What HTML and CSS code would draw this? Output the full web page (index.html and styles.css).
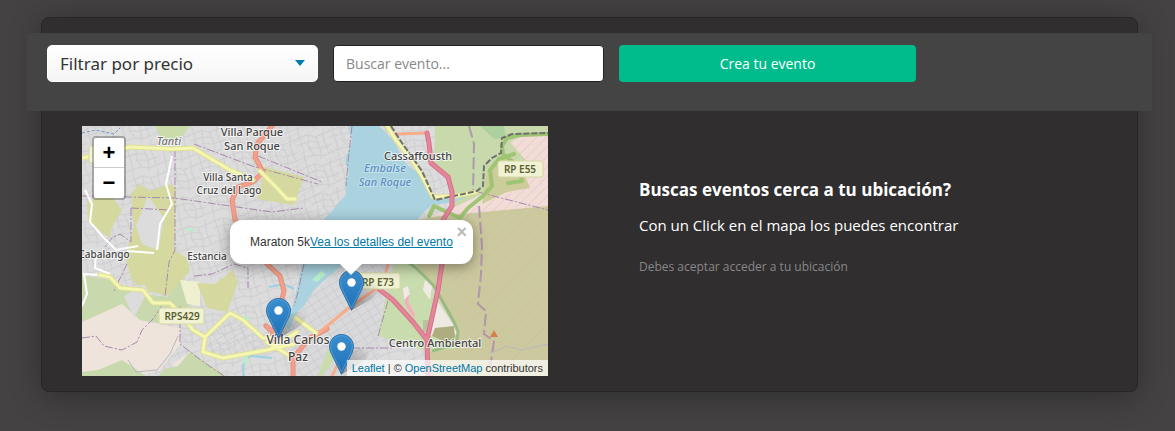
FILE: index.html
```html
<!DOCTYPE html>
<html lang="es">
<head>
<meta charset="utf-8">
<meta name="viewport" content="width=device-width, initial-scale=1">
<title>Eventos</title>
<link rel="stylesheet" href="styles.css">
</head>
<body>
<main class="card">
  <form class="toolbar">
    <div class="select-wrap">
      <select class="control select" aria-label="Filtrar por precio">
        <option>Filtrar por precio</option>
      </select>
    </div>
    <input class="control search" type="text" placeholder="Buscar evento..." aria-label="Buscar evento">
    <button class="control create" type="button">Crea tu evento</button>
  </form>
  <div class="content">
    <section class="map" aria-label="Mapa de eventos">
      <svg class="tiles" viewBox="0 0 466 250" preserveAspectRatio="xMidYMid slice">
        <defs>
          <pattern id="streets" width="34" height="30" patternUnits="userSpaceOnUse" patternTransform="rotate(-14)">
            <path d="M0 5L12 3 20 7 34 5M0 11L13 10 22 13M10 16L21 19 34 18M0 25L12 24 23 27 34 25M4 0L5 17 4 30M13 3L11 17 15 24M20 7L22 19 20 30M29 0L27 12 29 25" fill="none" stroke="#cdcdcf" stroke-width="1"/>
          </pattern>
          <pattern id="grid" width="9" height="7" patternUnits="userSpaceOnUse" patternTransform="rotate(-32)">
            <path d="M0 0H9M0 0V7" fill="none" stroke="#c6c6c8" stroke-width="1"/>
          </pattern>
          <pattern id="hatch" width="7" height="7" patternUnits="userSpaceOnUse" patternTransform="rotate(45)">
            <path d="M0 0V7" stroke="#e5a99d" stroke-width="1" opacity=".6"/>
          </pattern>
          <linearGradient id="pin" x1="0" y1="0" x2="0" y2="1">
            <stop offset="0" stop-color="#3b8fce"/><stop offset="1" stop-color="#1e6fb6"/>
          </linearGradient>
          <linearGradient id="shade" x1="0" y1="1" x2="1" y2="0">
            <stop offset="0" stop-color="#000" stop-opacity=".5"/><stop offset="1" stop-color="#000" stop-opacity="0"/>
          </linearGradient>
          <symbol id="marker" viewBox="0 0 42 41">
            <path d="M13 40L20 21Q29 11 39 15 43 22 31 30Z" fill="url(#shade)" opacity=".7"/>
            <path d="M12.500 .5C5.900 .5 .5 5.900 .5 12.600c0 2.600 1 5.300 2.200 7.700L12.500 40.300l9.800-20c1.200-2.400 2.200-5.100 2.200-7.700C24.500 5.900 19.100 .5 12.500 .5z" fill="url(#pin)" stroke="#2b6fa7" stroke-width="1"/>
            <path d="M12.500 1.600C6.500 1.600 1.600 6.500 1.600 12.600c0 2.300 .9 4.900 2 7.200l8.900 18 8.900-18c1.100-2.300 2-4.900 2-7.200C23.400 6.500 18.500 1.600 12.500 1.600z" fill="none" stroke="#5ba5dc" stroke-width="1" opacity=".7"/>
            <circle cx="12.500" cy="12.500" r="4.200" fill="#fff"/>
          </symbol>
        </defs>

        <rect width="466" height="250" fill="#dddcdd"/>
        <rect width="466" height="250" fill="url(#streets)"/>
        <path d="M229 170L262 138H320L300 172 296 250H212L205 200Z" fill="#d9d8da"/>
        <path d="M229 170L262 138H320L300 172 296 250H212L205 200Z" fill="url(#grid)"/>
        <path d="M215 0H262L272 34 262 74 240 94H216L150 90 160 62 181 45 176 25 192 0Z" fill="url(#grid)" opacity=".45"/>
        <path d="M124 211L148 187 181 212 180 222 141 231 122 226Z" fill="url(#grid)"/>

        <!-- land use -->
        <path d="M73 0H108L98 13 80 14Z" fill="#c9dcaa"/>
        <path d="M5 77L18 69 31 72 40 84 30 101 28 112 15 103 6 96Z" fill="#d5d9a0"/>
        <path d="M49 67L58 58 67 65 88 58 94 62 92 124 105 132 108 144 96 160 85 170 65 165 50 155 45 138 44 128 52 100Z" fill="#d5d9a0"/>
        <path d="M66 70L82 92 76 124 60 118 54 100Z" fill="#dddcdd"/>
        <path d="M183 41L222 51 212 79 175 73Z" fill="#d5d9a0"/>
        <path d="M0 149L28 154 60 168 85 171 98 155 110 155 108 180 78 197 51 194 40 182 0 196Z" fill="#c9d9ae"/>
        <path d="M0 196L40 178 58 194 98 202 98 218 78 244 58 250H0Z" fill="#eee4db"/>
        <path d="M42 170L62 158 66 164 52 192Z" fill="#dddcdd"/>
        <path d="M98 154L118 156 118 180 105 178Z" fill="#eff0d0"/>
        <path d="M115 157L133 158 151 144 156 157 145 186 125 182Z" fill="#d5d9a0"/>
        <path d="M90 238L108 226 118 234 100 250Z" fill="#eee4db"/>
        <path d="M0 246L16 244 40 234 64 250H0Z" fill="#c9d9ae"/>
        <path d="M77 250L82 243 96 240 108 226 144 250Z" fill="#c9d9ae"/>
        <path d="M353 0H466V90H372L370 60 352 38Z" fill="#c8d9ac"/>
        <path d="M398 0H422L424 12 412 13Z" fill="#add19e"/>
        <path d="M428 16L440 10 466 9V84L362 94 340 94 375 80 412 62 440 62 447 38Z" fill="#f1dcd8"/>
        <path d="M405 45L426 28 440 42 448 62 425 66 400 78Z" fill="#cdcd9b"/>
        <path d="M358 90L466 80V250H346L348 222 376 214 372 200 350 160 334 138V94Z" fill="#cbca9f"/>
        <path d="M428 16L466 9V250H395L380 180 366 150 362 94 440 62Z" fill="url(#hatch)"/>
        <path d="M312 138H334L376 205 376 222 346 226 296 210 302 180 306 158Z" fill="#c9dcae"/>
        <path d="M356 176L375 204 376 208 345 210Z" fill="#efe9e3"/>
        <path d="M353 202L372 200 373 212 364 216 350 210Z" fill="#aead7f"/>
        <path d="M341 194H348V206H341Z" fill="#b9c29e"/>
        <path d="M323 160L328 166 326 176 333 188 332 192 325 182 321 170Z" fill="#f4adba"/>
        <path d="M321 162L326 160 328 168 322 174ZM343 154L350 160 348 174 341 164Z" fill="#f0e9e4"/>
        <path d="M244 226L257 213 250 238 240 250H236Z" fill="#c9dcae"/>

        <!-- lake and streams -->
        <path d="M266 0H297L311 14 324 38 340 50 351 71 372 71 394 67 372 76 350 79 342 86 335 94 300 100 262 138 245 152 232 164 222 180 214 188 207 204 204 200 212 176 216 158 220 138 226 98 241 94 250 85 257 76 264 69 263 56 267 48 263 34 270 15Z" fill="#aad3df"/>
        <path d="M187 161L202 158 212 163M162 250Q159 235 168 230L190 232" fill="none" stroke="#9bd0e2" stroke-width="2"/>
        <path d="M148 62L153 63 152 68ZM105 102H112V105H105ZM160 190L168 192 164 198ZM230 154L239 145 244 148 235 156ZM160 234L167 228 164 240Z" fill="#b8efcb"/>

        <!-- boundaries -->
        <g class="boundary">
          <path d="M93 23V124L87 136 83 170M0 70L92 72 190 86 222 82M49 82V116L38 108 30 112 22 122M49 82L88 84M112 18L170 40 236 58M176 30L240 56"/>
          <path d="M0 212L14 210 22 220 40 224 55 216 60 204 72 192 82 176M98 180L98 218 120 235 142 250M112 150L130 148 152 138 166 142V162M222 138L216 166 212 180M45 138L32 165"/>
          <path d="M270 0L266 36 264 60M296 210L308 168M256 222H310M396 66L466 84"/>
          <path class="wide" d="M387 0L392 18 391 68M397 80L400 120 399 148 396 178 404 185 402 208 412 215 408 242"/>
        </g>
        <path d="M0 7L14 4 32 8 38 2" class="blue-line"/>

        <!-- tracks -->
        <path d="M3 64L10 78 8 96 22 112 34 124 56 120M90 30L84 58 90 78 78 98 75 124M14 127L13 142 28 148M0 180L5 168 2 148 18 149M45 125L72 127" class="track"/>
        <path d="M46 234L54 246 75 244 88 228 96 210M408 228L424 220 440 224 466 218" fill="none" stroke="#b8b8be" stroke-width="1"/>

        <!-- roads -->
        <path d="M190 0L175 18 173 31 181 46 171 56 156 61 150 74 153 94 170 120 185 138 198 150 202 165 196 190 189 215M211 250V232L228 212 245 203M184 200L198 212" class="road-case primary-case"/>
        <path d="M190 0L175 18 173 31 181 46 171 56 156 61 150 74 153 94 170 120 185 138 198 150 202 165 196 190 189 215M211 250V232L228 212 245 203M184 200L198 212" class="road primary"/>
        <path d="M228 214L268 181 301 158 306 138M316 8L345 7M250 250L260 230" class="road orange"/>
        <path d="M0 32L18 28 48 21 91 23 111 22 131 34 148 44 171 54M178 45L195 62 205 73 213 73M18 149L28 151 38 162 61 164 71 177 88 177 95 184 111 204 123 211 148 187 161 194 181 212 190 212M123 211L121 226 141 232 185 224 212 218M185 216L208 230M190 222L215 206M214 192L234 207" class="road-case yellow-case"/>
        <path d="M0 32L18 28 48 21 91 23 111 22 131 34 148 44 171 54M178 45L195 62 205 73 213 73M18 149L28 151 38 162 61 164 71 177 88 177 95 184 111 204 123 211 148 187 161 194 181 212 190 212M123 211L121 226 141 232 185 224 212 218M185 216L208 230M190 222L215 206M214 192L234 207" class="road yellow"/>
        <path d="M305 0L314 14 330 34 340 50 351 71 374 70 394 66" class="road-case yellow-case"/>
        <path d="M305 0L314 14 330 34 340 50 351 71 374 70 394 66" class="road yellow"/>
        <path d="M347 90L352 80 365 86 378 92 386 82 401 70 410 60 408 44 417 33 432 28" class="road green-road"/>
        <path d="M420 20L425 12 438 9 466 8M420 20L421 28 436 40 440 55 426 57" class="road green-road"/>
        <path d="M309 0L320 17 340 45 353 74 372 70 395 65 401 60 402 40 410 32 419 27 420 12 430 8 466 7" class="rail"/>
        <path d="M318 130L334 142 352 160 372 196 376 206 374 218 350 225" class="path-green"/>
        <path d="M345 7L347 17 349 37 366 51 370 66 370 80 361 94 362 118 360 138 356 164 345 214 346 250M298 164L311 174 331 196 345 214" class="road-case pink-case"/>
        <path d="M345 7L347 17 349 37 366 51 370 66 370 80 361 94 362 118 360 138 356 164 345 214 346 250M298 164L311 174 331 196 345 214" class="road pink"/>
        <path d="M408 211L412 204 416 211Z" fill="#d48248"/>

        <!-- road shields -->
        <g class="shield">
          <rect x="7" y="20" width="12" height="17" rx="2"/>
          <rect x="416" y="35" width="45" height="16" rx="2"/>
          <rect x="77" y="182" width="45" height="16" rx="2"/>
          <rect x="272" y="147" width="46" height="16" rx="2"/>
          <text x="438" y="47">RP E55</text>
          <text x="100" y="194">RPS429</text>
          <text x="296" y="160">RP E73</text>
        </g>

        <!-- place names -->
        <g class="place">
          <text x="170" y="10">Villa Parque</text>
          <text x="170" y="24">San Roque</text>
          <text x="146" y="55" class="small">Villa Santa</text>
          <text x="147" y="68" class="small">Cruz del Lago</text>
          <text x="336" y="34">Cassaffousth</text>
          <text x="22" y="132" class="small">Cabalango</text>
          <text x="125" y="134" class="small">Estancia</text>
          <text x="216" y="218" class="large">Villa Carlos</text>
          <text x="216" y="235" class="large">Paz</text>
          <text x="353" y="221">Centro Ambiental</text>
          <text x="87" y="19" class="river">Tanti</text>
          <text x="303" y="46" class="water">Embalse</text>
          <text x="303" y="60" class="water">San Roque</text>
        </g>
        <use href="#marker" x="257" y="144" width="42" height="41"/>
        <use href="#marker" x="184" y="172" width="42" height="41"/>
        <use href="#marker" x="247" y="208" width="42" height="41"/>
      </svg>
      <div class="zoom">
        <button type="button" aria-label="Acercar">+</button>
        <button type="button" aria-label="Alejar">−</button>
      </div>
      <div class="popup">
        <span>Maraton 5k<a href="#evento">Vea los detalles del evento</a></span>
        <button class="close" type="button" aria-label="Cerrar">×</button>
      </div>
      <div class="attribution"><a href="#leaflet">Leaflet</a> | © <a href="#osm">OpenStreetMap</a> contributors</div>
    </section>
    <section class="info">
      <h1>Buscas eventos cerca a tu ubicación?</h1>
      <p class="lead">Con un Click en el mapa los puedes encontrar</p>
      <p class="note">Debes aceptar acceder a tu ubicación</p>
    </section>
  </div>
</main>
</body>
</html>
```
FILE: styles.css
```css
* { box-sizing: border-box; }

body {
  margin: 0;
  padding: 17px 37px 39px 41px;
  background: #444242;
  color: #fff;
  font-family: "Open Sans", "Noto Sans", sans-serif;
}

.card {
  padding: 15px 0;
  border: 1px solid #282627;
  border-radius: 8px;
  background: #302e2f;
  box-shadow: 0 4px 32px rgba(0, 0, 0, .32);
}

.toolbar {
  display: grid;
  grid-template-columns: 271fr 271fr 297fr 201fr;
  gap: 15px;
  margin: 0 -15px;
  padding: 12px 20px 29px;
  border-radius: 3px;
  background: #444;
}

.control {
  width: 100%;
  height: 37px;
  margin: 0;
  border-radius: 4px;
  font-family: "Open Sans", "Noto Sans", sans-serif;
}

.select-wrap { position: relative; }

.select-wrap::after {
  content: "";
  position: absolute;
  top: 15px;
  right: 13px;
  border: 5px solid transparent;
  border-top: 6px solid #007cb8;
  border-bottom: 0;
  pointer-events: none;
}

.select {
  display: block;
  padding: 0 12px;
  border: 1px solid #fff;
  border-radius: 5px;
  appearance: none;
  background: linear-gradient(#fff, #f5f5f5);
  color: #333;
  font-family: "Noto Sans", sans-serif;
  font-size: 17px;
}

.search {
  padding: 0 12px;
  border: 1px solid #222;
  background: #fff;
  color: #444;
  font-size: 14px;
}

.search::placeholder { color: #888; opacity: 1; }

.create {
  border: 0;
  background: #00bc8c;
  color: #fff;
  font-size: 14px;
}

.content {
  display: grid;
  grid-template-columns: 466fr 458fr;
  gap: 91px;
  padding: 15px 40px 0;
}

.map {
  position: relative;
  height: 250px;
  overflow: hidden;
  font-family: "Liberation Sans", Arial, sans-serif;
  font-size: 12px;
}

.tiles { display: block; width: 100%; height: 100%; }

.boundary { fill: none; stroke: #a989ad; stroke-width: 1; stroke-dasharray: 8 2 2 2; }
.boundary .wide { stroke-width: 2; stroke-dasharray: 12 4; opacity: .8; }
.blue-line { fill: none; stroke: #6f97c4; stroke-width: 1; stroke-dasharray: 3 2; }
.track { fill: none; stroke: #fff; stroke-width: 2; }
.road, .road-case { fill: none; stroke-linejoin: round; stroke-linecap: round; }
.road { stroke-width: 3; }
.road-case { stroke-width: 5; }
.primary { stroke: #f2a08c; }
.primary-case { stroke: #e58f7c; }
.orange { stroke: #f7ad8b; }
.yellow { stroke: #f5f7b0; }
.yellow-case { stroke: #dedf98; }
.pink { stroke: #e4859a; }
.pink-case { stroke: #d6728a; }
.green-road { stroke: #9fc473; stroke-width: 4; }
.path-green { fill: none; stroke: #8fb57b; stroke-width: 3; opacity: .8; }
.rail { fill: none; stroke: #70706f; stroke-width: 2; stroke-dasharray: 6 2; }

.shield rect { fill: #f1f2d4; stroke: #d5d7a3; stroke-width: 1; }
.shield text { fill: #5c6130; font: 600 10px "Noto Sans", sans-serif; text-anchor: middle; }

.place text {
  fill: #444;
  stroke: rgba(255, 255, 255, .7);
  stroke-width: 2;
  paint-order: stroke;
  font: 500 11px "Noto Sans", sans-serif;
  text-anchor: middle;
}
.place .small { font-size: 10px; }
.place .large { font-size: 12px; }
.place .river { fill: #777; font-style: italic; }
.place .water { fill: #5b8fc4; stroke: rgba(255, 255, 255, .3); font-style: italic; }

.zoom {
  position: absolute;
  top: 10px;
  left: 10px;
  width: 34px;
  border: 2px solid rgba(0, 0, 0, .25);
  border-radius: 4px;
  background-clip: padding-box;
}

.zoom button {
  display: block;
  width: 30px;
  height: 30px;
  padding: 0;
  border: 0;
  border-radius: 0 0 2px 2px;
  background: #fff;
  color: #000;
  font: bold 22px/30px "Liberation Sans", Arial, sans-serif;
}

.zoom button:first-child {
  border-bottom: 1px solid #ccc;
  border-radius: 2px 2px 0 0;
}

.popup {
  position: absolute;
  top: 94px;
  left: 148px;
  padding: 13px 20px;
  border-radius: 12px;
  background: #fff;
  color: #333;
  line-height: 18px;
  white-space: nowrap;
  box-shadow: 0 3px 14px rgba(0, 0, 0, .4);
}

.popup::after {
  content: "";
  position: absolute;
  top: 100%;
  left: 50%;
  margin-left: -11px;
  border: 11px solid transparent;
  border-top-color: #fff;
  border-bottom: 0;
}

.map a { color: #0078a8; text-decoration: none; }
.map .popup a { text-decoration: underline; }

.close {
  position: absolute;
  top: 4px;
  right: 4px;
  width: 14px;
  padding: 0;
  border: 0;
  background: none;
  color: #bbb;
  font: bold 18px/16px "Liberation Sans", Arial, sans-serif;
}

.attribution {
  position: absolute;
  right: 0;
  bottom: 0;
  padding: 0 5px;
  background: rgba(255, 255, 255, .7);
  color: #333;
  font-size: 11px;
  line-height: 16px;
}

.info { padding-top: 52px; }

.info h1, .info p { margin: 0; }
.info h1 { font-size: 17px; line-height: 24px; font-weight: 700; }
.info .lead { margin-top: 11px; font-size: 15px; line-height: 24px; }
.info .note { margin-top: 21px; color: #888; font-size: 12px; line-height: 18px; }
```
